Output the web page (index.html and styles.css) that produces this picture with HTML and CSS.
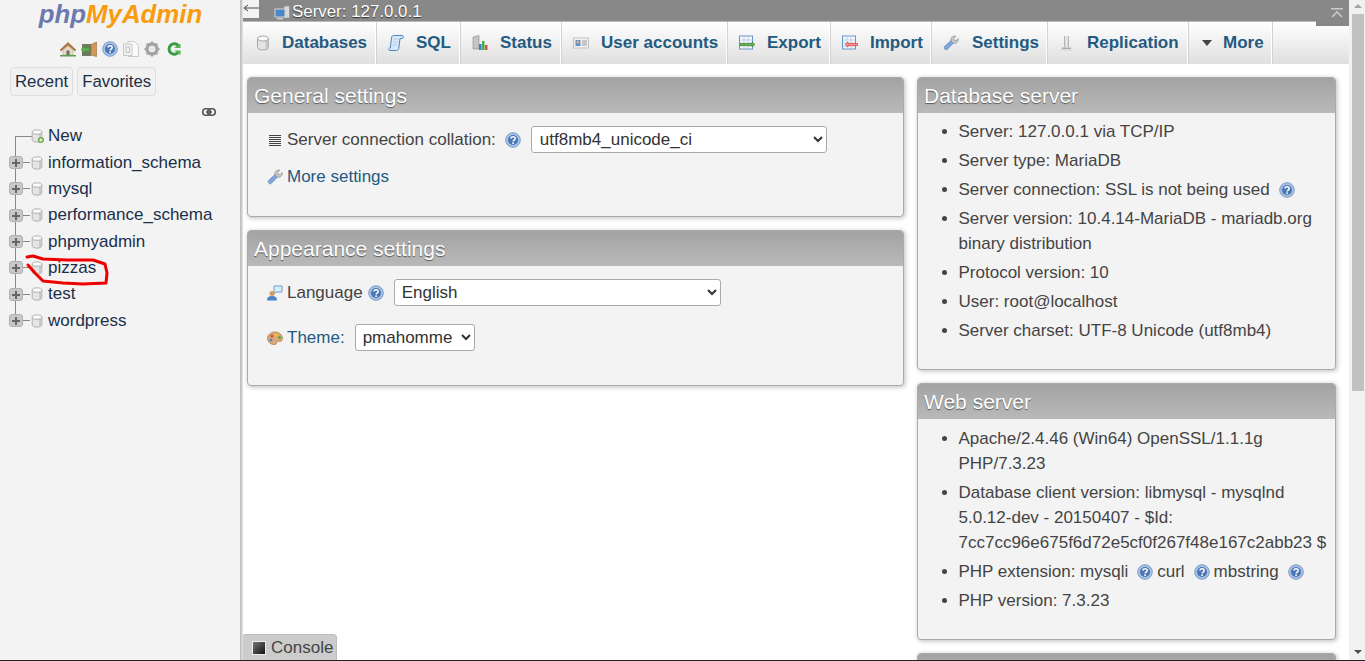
FILE: index.html
```html
<!DOCTYPE html>
<html lang="en">
<head>
    <meta charset="UTF-8">
    <title>127.0.0.1 / phpMyAdmin</title>
    <link rel="stylesheet" href="styles.css">
</head>
<body>
    <svg class="icon-defs" xmlns="http://www.w3.org/2000/svg">
        <symbol id="i-db" viewBox="0 0 16 16">
            <path d="M2.500 3.500v9c0 1.400 2.500 2.500 5.500 2.500s5.500-1.100 5.500-2.500v-9z" fill="#e4e4e4" stroke="#a8a8a8"/>
            <path d="M10.500 5.500v8.500c1.800-.3 3-1 3-1.500v-8z" fill="#c6c6c6"/>
            <ellipse cx="8" cy="3.500" rx="5.500" ry="2.500" fill="#fafafa" stroke="#a8a8a8"/>
        </symbol>
        <symbol id="i-help" viewBox="0 0 16 16">
            <circle cx="8" cy="8" r="7.300" fill="#a9c2e4" stroke="#7d9cc8"/>
            <circle cx="8" cy="8" r="5" fill="#4a76b4"/>
            <path d="M6 6.600c0-2.600 4.200-2.600 4.200-.1 0 1.600-2.100 1.500-2.100 3" fill="none" stroke="#fff" stroke-width="1.500"/>
            <rect x="7.300" y="10.400" width="1.600" height="1.600" fill="#fff"/>
        </symbol>
        <symbol id="i-wrench" viewBox="0 0 16 16">
            <path d="M1.500 11.500 8 5.500l2.500 2.500-6.300 6.500c-1.700 1.200-3.800-1.200-2.700-3z" fill="#7ea6dc" stroke="#5f86bd" stroke-width=".7"/>
            <path d="M8 6c-.8-3 1.700-5.600 4.900-4.800l-2.200 2.400.6 1.600 1.700.5 2.300-2.200c.5 3-2 5.500-5 4.600z" fill="#c9c9c9" stroke="#8b8b8b" stroke-width=".7"/>
        </symbol>
    </svg>

    <div class="page">
        <aside class="sidebar">
            <div class="logo"><span class="logo-php">php</span><span class="logo-my">MyAdmin</span></div>
            <div class="quick-icons">
                <svg class="icon" viewBox="0 0 16 16"><path d="M0 9 8 1.500 16 9l-1.500.7L8 4 1.500 9.700z" fill="#b6763a" stroke="#8a5526" stroke-width=".5"/><path d="M3 9.500 8 5l5 4.500V14H3z" fill="#e4dcc4" stroke="#a89a78" stroke-width=".5"/><rect x="6.500" y="9.500" width="3" height="4.500" fill="#6b6b6b"/><rect x="0" y="14" width="16" height="1.500" fill="#57a24a"/></svg>
                <svg class="icon" viewBox="0 0 16 16"><rect x="1" y="3" width="9" height="12" fill="#6d7b62"/><path d="M10 3.500 15.500 1v14.500L10 14z" fill="#d29a56" stroke="#9c6b32" stroke-width=".6"/><path d="M0 8.500 4 5v2h4.500v3H4v2z" fill="#62b34f" stroke="#3f8a31" stroke-width=".5"/></svg>
                <svg class="icon"><use href="#i-help"/></svg>
                <svg class="icon" viewBox="0 0 16 16"><path d="M5 .5h6.500l4 4v11H5z" fill="#fafafa" stroke="#c9c9c9"/><path d="M.5 3H9v11.500H.5z" fill="#f1f1f1" stroke="#c9c9c9"/><rect x="3" y="6" width="3.500" height="5.500" fill="none" stroke="#c4c4c4"/></svg>
                <svg class="icon" viewBox="0 0 16 16"><circle cx="8" cy="8" r="5" fill="none" stroke="#a3a3a3" stroke-width="3.400"/><path d="M8 .5v15M.5 8h15M2.700 2.700l10.600 10.600M13.300 2.700 2.700 13.300" stroke="#a3a3a3" stroke-width="2" stroke-dasharray="3 9"/><circle cx="8" cy="8" r="2" fill="#e3e3e3"/></svg>
                <svg class="icon icon-narrow" viewBox="0 0 16 16"><path d="M12.500 5A5.200 5.200 0 1 0 12.500 11" fill="none" stroke="#3d9a42" stroke-width="3"/><path d="M8 7h6.500V2.500zM8 9.500h6.500V14z" fill="#56b34c"/></svg>
            </div>
            <div class="nav-tabs">
                <a class="nav-btn">Recent</a>
                <a class="nav-btn">Favorites</a>
            </div>
            <div class="link-row">
                <svg class="link-icon" viewBox="0 0 14 8"><rect x=".8" y=".8" width="7.500" height="6.400" rx="3" fill="none" stroke="#555" stroke-width="1.600"/><rect x="5.700" y=".8" width="7.500" height="6.400" rx="3" fill="none" stroke="#555" stroke-width="1.600"/><path d="M4 4h6" stroke="#555" stroke-width="1.500"/></svg>
            </div>
            <ul class="tree">
                <li class="tree-row tree-new">
                    <span class="tree-stub"></span>
                    <svg class="db-icon" viewBox="0 0 16 16"><use href="#i-db"/><circle cx="12.500" cy="12.500" r="3.500" fill="#6fa84c"/><path d="M10.500 12.500h4M12.500 10.500v4" stroke="#fff" stroke-width="1.200"/></svg>
                    <a>New</a>
                </li>
                <li class="tree-row"><span class="plus"></span><span class="tree-dash"></span><svg class="db-icon"><use href="#i-db"/></svg><a>information_schema</a></li>
                <li class="tree-row"><span class="plus"></span><span class="tree-dash"></span><svg class="db-icon"><use href="#i-db"/></svg><a>mysql</a></li>
                <li class="tree-row"><span class="plus"></span><span class="tree-dash"></span><svg class="db-icon"><use href="#i-db"/></svg><a>performance_schema</a></li>
                <li class="tree-row"><span class="plus"></span><span class="tree-dash"></span><svg class="db-icon"><use href="#i-db"/></svg><a>phpmyadmin</a></li>
                <li class="tree-row"><span class="plus"></span><span class="tree-dash"></span><svg class="db-icon"><use href="#i-db"/></svg><a>pizzas</a></li>
                <li class="tree-row"><span class="plus"></span><span class="tree-dash"></span><svg class="db-icon"><use href="#i-db"/></svg><a>test</a></li>
                <li class="tree-row tree-last"><span class="plus"></span><span class="tree-dash"></span><svg class="db-icon"><use href="#i-db"/></svg><a>wordpress</a></li>
            </ul>
            <svg class="scribble" viewBox="0 0 120 50"><path d="M2 3 8 2 18 5 42 6 68 6 80 10 82 19 81 29 58 30 38 29 18 27 10 19 3 11" fill="none" stroke="#ee0000" stroke-width="3" stroke-linecap="round" stroke-linejoin="round"/></svg>
        </aside>

        <div class="main">
            <div class="server-bar">
                <svg class="server-icon" viewBox="0 0 16 16"><rect x="10" y="1" width="5.500" height="12" fill="#d8d8d8" stroke="#8a8a8a" stroke-width=".6"/><rect x="1" y="4" width="10" height="8" fill="#4d86c6" stroke="#d6d6d6"/><rect x="3" y="13" width="6" height="1.500" fill="#c8c8c8"/></svg>
                <span>Server: 127.0.0.1</span>
            </div>
            <nav class="tabs">
                <a class="tab tab-db"><svg class="icon"><use href="#i-db"/></svg>Databases</a>
                <a class="tab tab-sql"><svg class="icon" viewBox="0 0 16 16"><path d="M3.500 3C3.500 1 5 .5 6 .5h8c1.500 0 1.800 2.500.5 3H12l-1.200 10c-.2 1.500-1.300 2-2.300 2H2c-1.500 0-1.800-2-.5-2.500h.8z" fill="#d8e8f8" stroke="#4f86c2"/><path d="M5.500 4h5M5 7h5M4.500 10h5" stroke="#a9c6e6" stroke-width=".8"/></svg>SQL</a>
                <a class="tab tab-status"><svg class="icon" viewBox="0 0 16 16"><path d="M1 2 7 .5V14H1z" fill="#c4c4c4" stroke="#8d8d8d" stroke-width=".6"/><rect x="7" y="9" width="2.500" height="6" fill="#3c7bc8"/><rect x="10" y="6" width="2.500" height="9" fill="#4aa845"/><rect x="13" y="10" width="2.500" height="5" fill="#d9503f"/></svg>Status</a>
                <a class="tab tab-users"><svg class="icon" viewBox="0 0 16 16"><rect x=".5" y="3" width="15" height="10" fill="#f2f2f2" stroke="#c2c2c2"/><rect x="2.500" y="5" width="5" height="6" fill="#5d91cf"/><circle cx="5" cy="7" r="1.500" fill="#e7b07a"/><path d="M9 6h5M9 8h5M9 10h5" stroke="#9a9a9a"/></svg>User accounts</a>
                <a class="tab tab-export"><svg class="icon" viewBox="0 0 16 16"><rect x=".5" y="1" width="13" height="13" fill="#f4f8fc" stroke="#6a93c8"/><path d="M1 5h12M1 8h12M1 11h12M5 1v13M9 1v13" stroke="#b4c8e2" stroke-width=".8"/><path d="M1 8.500h12V7l3 2.500-3 2.500v-1.500H1z" fill="#66b04f" stroke="#2f7d25" stroke-width=".6"/></svg>Export</a>
                <a class="tab tab-import"><svg class="icon" viewBox="0 0 16 16"><rect x=".5" y="1" width="13" height="13" fill="#f4f8fc" stroke="#6a93c8"/><path d="M1 5h12M1 8h12M1 11h12M5 1v13M9 1v13" stroke="#b4c8e2" stroke-width=".8"/><path d="M16 8.500H6V7L3 9.500 6 12v-1.500h10z" fill="#ff8f8f" stroke="#e22b2b" stroke-width=".6"/></svg>Import</a>
                <a class="tab tab-settings"><svg class="icon"><use href="#i-wrench"/></svg>Settings</a>
                <a class="tab tab-replication"><svg class="icon" viewBox="0 0 16 16"><path d="M5 1h1.500v11H5zM8.500 1H10v11H8.500z" fill="#b5b5b5"/><path d="M6.500 1h2v11h-2z" fill="#e9e9e9"/><rect x="3" y="12.500" width="9" height="1.500" fill="#a9a9a9"/><rect x="1.500" y="14.500" width="12" height="1" fill="#d2d2d2"/></svg>Replication</a>
                <a class="tab tab-more"><span class="more-arrow"></span>More</a>
            </nav>
            <div class="content">
                <div class="col-left">
                    <section class="panel">
                        <h2>General settings</h2>
                        <div class="panel-body">
                            <div class="form-row row-collation">
                                <svg class="icon" viewBox="0 0 16 16"><path d="M2 3.500h12M2 5.500h12M2 7.500h12M2 9.500h12M2 11.500h12M2 13.500h12" stroke="#444" stroke-width="1"/></svg>
                                <label>Server connection collation:</label>
                                <svg class="icon help-icon"><use href="#i-help"/></svg>
                                <select class="sel-collation"><option>utf8mb4_unicode_ci</option></select>
                            </div>
                            <div class="form-row row-more">
                                <svg class="icon"><use href="#i-wrench"/></svg>
                                <a>More settings</a>
                            </div>
                        </div>
                    </section>
                    <section class="panel">
                        <h2>Appearance settings</h2>
                        <div class="panel-body">
                            <div class="form-row row-language">
                                <svg class="icon" viewBox="0 0 16 16"><path d="M7 1h8v6H9l-2 2z" fill="#dcebfa" stroke="#6f9bd0"/><circle cx="5" cy="8.500" r="2.500" fill="#d99a5b"/><path d="M0 15.500c0-3.500 2-4.500 5-4.500s5 1 5 4.500z" fill="#4d86c6"/></svg>
                                <label>Language</label>
                                <svg class="icon help-lang"><use href="#i-help"/></svg>
                                <select class="sel-language"><option>English</option></select>
                            </div>
                            <div class="form-row row-theme">
                                <svg class="icon" viewBox="0 0 16 16"><path d="M8 2C3.500 2 .5 5 .5 8.500S4 15 8 14.500c2-.3 1-2.500 2.500-3 2-.5 5 .5 5-3C15.500 5 12.500 2 8 2z" fill="#dca878" stroke="#a9744a" stroke-width=".7"/><circle cx="5" cy="6" r="1.500" fill="#d84a3c"/><circle cx="9" cy="5" r="1.500" fill="#e8c93a"/><circle cx="12.500" cy="7.500" r="1.500" fill="#4da84a"/><circle cx="4" cy="10" r="1.500" fill="#4d86c6"/></svg>
                                <a>Theme:</a>
                                <select class="sel-theme"><option>pmahomme</option></select>
                            </div>
                        </div>
                    </section>
                </div>
                <div class="col-right">
                    <section class="panel">
                        <h2>Database server</h2>
                        <ul class="info-list list-db">
                            <li>Server: 127.0.0.1 via TCP/IP</li>
                            <li>Server type: MariaDB</li>
                            <li>Server connection: SSL is not being used <svg class="icon help-inline"><use href="#i-help"/></svg></li>
                            <li>Server version: 10.4.14-MariaDB - mariadb.org binary distribution</li>
                            <li>Protocol version: 10</li>
                            <li>User: root@localhost</li>
                            <li>Server charset: UTF-8 Unicode (utf8mb4)</li>
                        </ul>
                    </section>
                    <section class="panel">
                        <h2>Web server</h2>
                        <ul class="info-list list-web">
                            <li>Apache/2.4.46 (Win64) OpenSSL/1.1.1g PHP/7.3.23</li>
                            <li>Database client version: libmysql - mysqlnd 5.0.12-dev - 20150407 - $Id: 7cc7cc96e675f6d72e5cf0f267f48e167c2abb23 $</li>
                            <li>PHP extension: mysqli <svg class="icon help-inline"><use href="#i-help"/></svg> curl <svg class="icon help-inline"><use href="#i-help"/></svg> mbstring <svg class="icon help-inline"><use href="#i-help"/></svg></li>
                            <li>PHP version: 7.3.23</li>
                        </ul>
                    </section>
                    <section class="panel panel-cut">
                        <h2></h2>
                    </section>
                </div>
            </div>
            <div class="nav-toggle"><svg viewBox="0 0 16 8" width="16" height="8"><path d="M1 4h15M1 4l4-3M1 4l4 3" fill="none" stroke="#444" stroke-width="1"/></svg></div>
            <div class="top-toggle"><svg viewBox="0 0 12 10" width="12" height="10"><path d="M0 .8h12M1 9l5-5 5 5" fill="none" stroke="#c9c9c9" stroke-width="1.600"/></svg></div>
            <div class="console-tab"><span class="console-icon"></span>Console</div>
        </div>

        <div class="scrollbar">
            <span class="arrow-up"></span>
            <div class="scroll-thumb"></div>
            <span class="arrow-down"></span>
        </div>
    </div>
    <div class="bottom-line"></div>
</body>
</html>
```

FILE: styles.css
```css
* {
    box-sizing: border-box;
}

html, body {
    margin: 0;
    height: 661px;
    overflow: hidden;
}

body {
    font-family: "Liberation Sans", Arial, sans-serif;
    font-size: 17px;
    color: #444;
    background: #fff;
}

.icon-defs {
    display: none;
}

.icon {
    width: 16px;
    height: 16px;
    flex: none;
}

.page {
    display: flex;
    height: 660px;
}

.bottom-line {
    height: 1px;
    background: #222;
}

/* sidebar */
.sidebar {
    position: relative;
    width: 243px;
    flex: none;
    background: linear-gradient(to right, #f3f3f3 240px, #b8b8b8 240px, #e4e4e4 243px);
}

.logo {
    height: 41px;
    text-align: center;
    padding-right: 2px;
    font-size: 25.800px;
    line-height: 29px;
    font-weight: bold;
    font-style: italic;
}

.logo-php {
    color: #6c78af;
}

.logo-my {
    color: #f89c0e;
}

.quick-icons {
    display: flex;
    gap: 5px;
    padding-left: 60px;
    height: 26px;
}

.icon-narrow {
    margin-left: 1px;
}

.nav-tabs {
    display: flex;
    gap: 4px;
    padding-left: 10px;
}

.nav-btn {
    height: 29px;
    line-height: 27px;
    padding: 0 4px;
    border: 1px solid #ddd;
    border-radius: 4px;
    color: #1d2f45;
    background: #f1f1f1;
    font-size: 16.800px;
}

.link-row {
    display: flex;
    justify-content: flex-end;
    padding: 12px 27px 0 0;
}

.link-icon {
    width: 14px;
    height: 8px;
}

.tree {
    list-style: none;
    margin: 7px 0 0;
    padding: 0 0 0 9px;
}

.tree-row {
    position: relative;
    display: flex;
    align-items: center;
    height: 26.350px;
    color: #1a2f4a;
}

/* vertical tree line */
.tree-row::before {
    content: "";
    position: absolute;
    left: 6px;
    top: 0;
    bottom: 0;
    border-left: 1px solid #888;
}

.tree-new::before {
    top: 13px;
}

.tree-last::before {
    bottom: 13px;
}

.tree-stub {
    width: 21px;
    margin-left: 6px;
    margin-right: -6px;
    border-top: 1px solid #888;
}

.plus {
    position: relative;
    z-index: 1;
    width: 14px;
    height: 13px;
    background: #c8c8c8;
    border: 1px solid #b0b0b0;
    border-radius: 3px;
}

.plus::before,
.plus::after {
    content: "";
    position: absolute;
    background: #666;
}

.plus::before {
    left: 2px;
    top: 5px;
    width: 8px;
    height: 2px;
}

.plus::after {
    left: 5px;
    top: 2px;
    width: 2px;
    height: 8px;
}

.tree-dash {
    width: 7px;
    border-top: 1px solid #888;
}

.db-icon {
    width: 14px;
    height: 14px;
    margin-right: 4px;
    flex: none;
}

.scribble {
    position: absolute;
    left: 25px;
    top: 254px;
    width: 120px;
    height: 50px;
}

/* main area */
.main {
    position: relative;
    flex: 1;
    min-width: 0;
    overflow: hidden;
}

.server-bar {
    display: flex;
    align-items: flex-end;
    gap: 2px;
    height: 21px;
    padding-left: 31px;
    background: #888;
    color: #fff;
    font-size: 16.900px;
    line-height: 19px;
    text-shadow: 0 1px 1px #333;
}

.server-icon {
    width: 16px;
    height: 16px;
}

.tabs {
    display: flex;
    height: 43px;
    border-top: 1px solid #bbb;
    background: linear-gradient(#fff, #dfdfdf);
}

.tab {
    display: flex;
    align-items: center;
    gap: 12px;
    padding: 0 0 0 12px;
    border-right: 1px solid #fff;
    box-shadow: 1px 0 0 #d2d2d2;
    color: #235a81;
    font-weight: bold;
    white-space: nowrap;
}

.tab-db {
    width: 133px;
    gap: 11px;
}

.tab-sql {
    width: 84px;
    gap: 12px;
}

.tab-status {
    width: 101px;
}

.tab-users {
    width: 166px;
}

.tab-export {
    width: 103px;
}

.tab-import {
    width: 101px;
}

.tab-settings {
    width: 116px;
    gap: 13px;
}

.tab-replication {
    width: 141px;
}

.tab-more {
    width: 84px;
    gap: 11px;
}

.more-arrow {
    width: 0;
    height: 0;
    margin-left: 2px;
    border-left: 5px solid transparent;
    border-right: 5px solid transparent;
    border-top: 6px solid #444;
}

.content {
    display: flex;
    align-items: flex-start;
    gap: 13px;
    padding: 13px 0 0 4px;
}

.col-left {
    width: 657px;
    display: flex;
    flex-direction: column;
    gap: 13px;
}

.col-right {
    width: 419px;
    display: flex;
    flex-direction: column;
    gap: 13px;
}

.panel {
    background: #f3f3f3;
    border: 1px solid #aaa;
    border-radius: 4px;
    box-shadow: 1px 1px 5px #bbb;
    overflow: hidden;
}

.panel h2 {
    margin: 0;
    height: 35px;
    padding: 0 6px;
    background: linear-gradient(#a3a3a3, #b9b9b9);
    color: #fff;
    font-size: 21px;
    font-weight: normal;
    line-height: 36px;
    text-shadow: 0 1px 1px #555;
}

.panel-body {
    padding: 13px 19px 0;
}

.form-row {
    display: flex;
    align-items: center;
}

.form-row .icon:first-child {
    margin-right: 4px;
}

.form-row a {
    color: #235a81;
}

.help-icon {
    margin-left: 9px;
}

.help-lang {
    margin-left: 5px;
}

.row-collation {
    height: 27px;
}

.row-more {
    height: 25px;
    margin-top: 11px;
    padding-bottom: 27px;
    box-sizing: content-box;
}

.row-language {
    height: 27px;
}

.row-theme {
    height: 27px;
    margin-top: 18px;
    padding-bottom: 34px;
    box-sizing: content-box;
}

select {
    height: 27px;
    padding: 0 3px;
    border: 1px solid #aaa;
    border-radius: 3px;
    background-color: #fff;
    color: #333;
    font-family: inherit;
    font-size: 17px;
}

.sel-collation {
    width: 296px;
    margin-left: 10px;
    padding-left: 4px;
}

.sel-language {
    width: 327px;
    margin-left: 10px;
}

.sel-theme {
    width: 120px;
    margin-left: 10px;
}

.info-list {
    margin: 6px 0 0;
    padding: 0 6px 0 40.500px;
    line-height: 25px;
}

.info-list li {
    margin-bottom: 4px;
}

.list-db {
    padding-bottom: 22px;
}

.list-web {
    margin-top: 7px;
    padding-bottom: 22px;
}

.help-inline {
    vertical-align: -3px;
    margin: 0 -1px 0 4.500px;
}

.nav-toggle {
    position: absolute;
    left: 0;
    top: 0;
    width: 16px;
    height: 18px;
    padding-top: 4px;
    background: #f3f3f3;
}

.nav-toggle svg,
.top-toggle svg {
    display: block;
}

.top-toggle {
    position: absolute;
    right: 0;
    top: 0;
    width: 33px;
    height: 26px;
    padding: 8px 0 0 15px;
    background: #888;
}

.console-tab {
    position: absolute;
    left: -1px;
    bottom: 0;
    display: flex;
    align-items: center;
    gap: 5px;
    height: 26px;
    width: 95px;
    padding-left: 9px;
    background: #ccc;
    border: 1px solid #bbb;
    border-bottom: 0;
    border-radius: 4px 4px 0 0;
    color: #444;
}

.console-icon {
    width: 14px;
    height: 14px;
    border: 1px solid #eee;
    background: linear-gradient(135deg, #777, #111);
}

/* fake browser scrollbar */
.scrollbar {
    position: relative;
    width: 16px;
    flex: none;
    padding: 14px 1px 0 3px;
    background: #f1f1f1;
}

.scroll-thumb {
    height: 377px;
    background: #c1c1c1;
}

.arrow-up,
.arrow-down {
    position: absolute;
    left: 5px;
    width: 0;
    height: 0;
    border-left: 4px solid transparent;
    border-right: 4px solid transparent;
}

.arrow-up {
    top: 4px;
    border-bottom: 4px solid #a3a3a3;
}

.arrow-down {
    bottom: 6px;
    border-top: 4px solid #505050;
}
```
